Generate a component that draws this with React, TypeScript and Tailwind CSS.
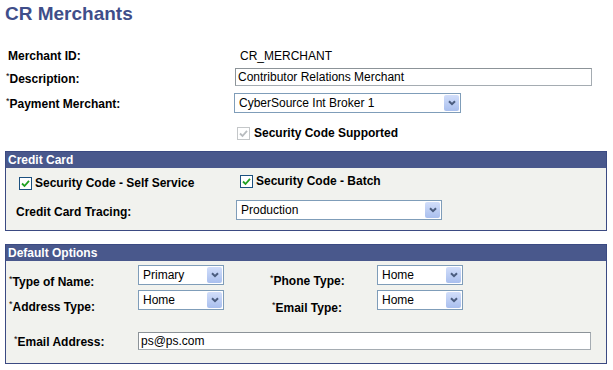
import React from 'react';

const font = { fontFamily: '"Liberation Sans", Arial, sans-serif' };

const Req = () => (
    <span className="text-[9px] leading-none align-top font-normal">*</span>
);

const Chevron = () => (
    <svg width="8" height="6" viewBox="0 0 8 6">
        <path d="M1 1.2 L4 4.2 L7 1.2" fill="none" stroke="#4a5c7e" strokeWidth="2" />
    </svg>
);

interface SelectProps {
    value: string;
    className: string;
}

const Select: React.FC<SelectProps> = ({ value, className }) => (
    <div className={`h-[20px] border border-[#7f9db9] bg-white flex items-center justify-between pl-[4px] pr-[1px] ${className}`}>
        <span className="text-[12px] leading-[14px] text-black">{value}</span>
        <span className="w-[15px] h-[16px] rounded-[2px] bg-gradient-to-b from-[#d2defa] to-[#a9bfee] flex items-center justify-center">
            <Chevron />
        </span>
    </div>
);

const Check = ({ disabled }: { disabled?: boolean }) => (
    <span
        className={
            disabled
                ? 'w-[13px] h-[13px] border border-[#c4c7c9] bg-white flex items-center justify-center shrink-0'
                : 'w-[13px] h-[13px] border border-[#1c5180] bg-white flex items-center justify-center shrink-0'
        }
    >
        <svg width="9" height="9" viewBox="0 0 9 9">
            <path
                d="M1 4.5 L3.5 7 L8 1.8"
                fill="none"
                stroke={disabled ? '#b8bcbf' : '#21a121'}
                strokeWidth="1.8"
            />
        </svg>
    </span>
);

const SectionHeader = ({ title }: { title: string }) => (
    <div className="h-[16px] bg-[#49588c] pl-[2px] flex items-center">
        <span className="text-[12px] leading-[14px] font-bold text-white">{title}</span>
    </div>
);

export default function App() {
    return (
        <div className="w-[613px] h-[370px] bg-white text-black overflow-hidden" style={font}>
            <h1 className="pl-[5px] pt-[4px] text-[19px] leading-[20px] font-bold text-[#3f4e8a]">
                CR Merchants
            </h1>

            <div className="pl-[6px] mt-[24px] text-[12px] leading-[14px]">
                <div className="flex items-center h-[16px]">
                    <div className="w-[228px] font-bold pl-[2px]">Merchant ID:</div>
                    <div className="pl-[6px]">CR_MERCHANT</div>
                </div>
                <div className="flex items-center h-[20px] mt-[3px]">
                    <div className="w-[229px] font-bold pt-[3px]">
                        <Req />Description:
                    </div>
                    <div className="w-[357px] h-[18px] border border-[#a5acb2] border-t-[#8c9398] border-l-[#8c9398] bg-white pl-[2px] flex items-center">
                        Contributor Relations Merchant
                    </div>
                </div>
                <div className="flex items-center h-[20px] mt-[6px]">
                    <div className="w-[228px] font-bold pt-[1px]">
                        <Req />Payment Merchant:
                    </div>
                    <Select value="CyberSource Int Broker 1" className="w-[227px]" />
                </div>
                <div className="flex items-center h-[16px] mt-[12px] pl-[231px] gap-[4px]">
                    <Check disabled />
                    <span className="font-bold">Security Code Supported</span>
                </div>
            </div>

            <div className="ml-[5px] w-[602px] mt-[10px] border border-[#3b4a82] bg-[#f1f2ee] text-[12px] leading-[14px]">
                <SectionHeader title="Credit Card" />
                <div className="flex items-start h-[16px] mt-[6px] pl-[13px]">
                    <div className="flex items-center gap-[3px] w-[221px] mt-[2px]">
                        <Check />
                        <span className="font-bold">Security Code - Self Service</span>
                    </div>
                    <div className="flex items-center gap-[3px]">
                        <Check />
                        <span className="font-bold">Security Code - Batch</span>
                    </div>
                </div>
                <div className="flex items-center mt-[10px] pl-[10px] pb-[10px]">
                    <div className="w-[220px] font-bold pt-[3px]">Credit Card Tracing:</div>
                    <Select value="Production" className="w-[206px]" />
                </div>
            </div>

            <div className="ml-[5px] w-[602px] mt-[13px] border border-[#3b4a82] bg-[#f1f2ee] text-[12px] leading-[14px]">
                <SectionHeader title="Default Options" />
                <div className="flex items-start mt-[4px] pl-[3px]">
                    <div className="w-[129px] font-bold mt-[10px]">
                        <Req />Type of Name:
                    </div>
                    <Select value="Primary" className="w-[86px]" />
                    <div className="w-[153px] pl-[46px] font-bold mt-[9px]">
                        <Req />Phone Type:
                    </div>
                    <Select value="Home" className="w-[86px]" />
                </div>
                <div className="flex items-start mt-[1px] pl-[3px]">
                    <div className="w-[129px] font-bold mt-[10px]">
                        <Req />Address Type:
                    </div>
                    <Select value="Home" className="w-[86px]" />
                    <div className="w-[153px] pl-[48px] font-bold mt-[11px]">
                        <Req />Email Type:
                    </div>
                    <Select value="Home" className="w-[86px]" />
                </div>
                <div className="flex items-center mt-[17px] pl-[8px] pb-[13px]">
                    <div className="w-[124px] font-bold pt-[2px]">
                        <Req />Email Address:
                    </div>
                    <div className="w-[453px] h-[18px] border border-[#a5acb2] border-t-[#8c9398] border-l-[#8c9398] bg-white pl-[2px] flex items-center">
                        ps@ps.com
                    </div>
                </div>
            </div>
        </div>
    );
}
